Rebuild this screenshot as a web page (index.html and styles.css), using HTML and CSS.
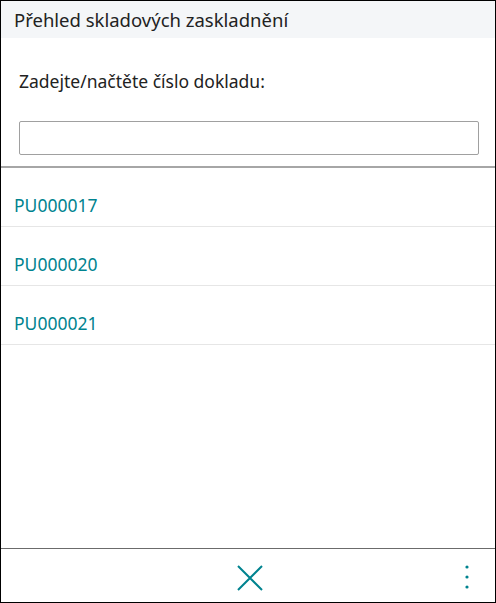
FILE: index.html
```html
<!DOCTYPE html>
<html lang="cs">
<head>
<meta charset="utf-8">
<link rel="stylesheet" href="styles.css">
</head>
<body>
<div class="app">
  <header class="header">Přehled skladových zaskladnění</header>
  <section class="form">
    <label class="label" for="doc">Zadejte/načtěte číslo dokladu:</label>
    <input class="input" id="doc" type="text">
  </section>
  <ul class="list">
    <li class="item">PU000017</li>
    <li class="item">PU000020</li>
    <li class="item">PU000021</li>
  </ul>
  <footer class="footer">
    <button class="btn close" aria-label="Zavřít">
      <svg width="26" height="26" viewBox="0 0 26 26"><path d="M1 1L25 25M25 1L1 25" stroke="#00838f" stroke-width="2" fill="none"/></svg>
    </button>
    <button class="btn more" aria-label="Více">
      <svg width="6" height="26" viewBox="0 0 6 26"><circle cx="3" cy="3" r="1.6" fill="#00838f"/><circle cx="3" cy="13" r="1.6" fill="#00838f"/><circle cx="3" cy="23" r="1.6" fill="#00838f"/></svg>
    </button>
  </footer>
</div>
</body>
</html>
```
FILE: styles.css
```css
* { box-sizing: border-box; }
html, body { margin: 0; padding: 0; background: #fff; }
body { font-family: "Noto Sans", "Open Sans", sans-serif; color: #212121; }
.app {
  width: 496px;
  height: 603px;
  border: 1px solid #000;
  display: flex;
  flex-direction: column;
}
.header {
  height: 37px;
  background: #f4f6f8;
  padding: 7px 0 0 13px;
  font-size: 18.5px;
  line-height: 24px;
  color: #222;
}
.form {
  padding: 31px 16px 11px 18px;
  border-bottom: 2px solid #a6a6a6;
  display: flex;
  flex-direction: column;
}
.label {
  font-size: 17.5px;
  line-height: 24px;
  color: #222;
}
.input {
  margin-top: 28px;
  width: 460px;
  height: 34px;
  border: 1px solid #a0a0a0;
  border-radius: 2px;
  background: #fff;
}
.list {
  list-style: none;
  margin: 0;
  padding: 0;
  flex: 1;
}
.item {
  height: 59px;
  padding: 25px 0 0 13px;
  font-size: 17.5px;
  line-height: 24px;
  color: #00838f;
  border-bottom: 1px solid #e6e6e6;
}
.footer {
  height: 54px;
  border-top: 1px solid #6b6b6b;
  position: relative;
  display: flex;
  align-items: center;
  justify-content: center;
}
.btn {
  border: 0;
  background: none;
  padding: 0;
  display: flex;
}
.close { margin-top: 5px; margin-left: 3px; }
.more {
  position: absolute;
  right: 25px;
  top: 15px;
}
```
